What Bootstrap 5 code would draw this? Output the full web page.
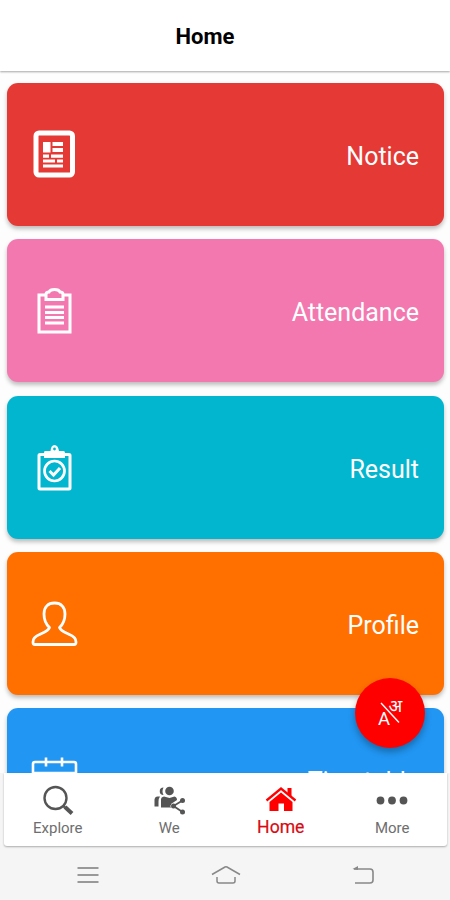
<!DOCTYPE html>
<html lang="en">
<head>
<meta charset="utf-8">
<meta name="viewport" content="width=device-width, initial-scale=1">
<title>Home</title>
<link href="https://cdn.jsdelivr.net/npm/bootstrap@5.3.0/dist/css/bootstrap.min.css" rel="stylesheet">
<style>
body{font-family:Roboto,"Liberation Sans",sans-serif;background:#f5f5f5}
.app-screen{height:900px}
.top-bar{height:71px;font-size:22px;line-height:74px;box-shadow:0 1px 2px rgba(0,0,0,.35);z-index:1;padding-right:40px}
.tile-list{height:702px;padding:12px 6px 0 7px;gap:13.3px;background:#fdfdfd}
.tile{height:143px;border-radius:11px;padding:0 25px 0 23px;font-size:25px;color:#fff;box-shadow:0 3px 4px rgba(0,0,0,.25)}
.tile svg{margin-bottom:1px}
.tile-notice{background:#e53935}
.tile-attendance{background:#f478b0}
.tile-result{background:#03b6cf}
.tile-profile{background:#ff7000}
.tile-timetable{background:#2196f3}
.tile-label{padding-top:5px;line-height:1.2}
.fab{right:25px;bottom:152px;width:70px;height:70px;background:#f00;box-shadow:0 4px 7px rgba(0,0,0,.3);z-index:2}
.tab-bar{height:73px;margin:0 3px 0 4px;box-shadow:0 1px 2px rgba(0,0,0,.3);border-radius:0 0 3px 3px;z-index:1}
.tab-row{margin:0 -1px 0 -2px}
.tab-item{font-size:15px;color:#6e6e6e;line-height:18px;padding-top:10px}
.tab-item svg{margin-bottom:2px}
.tab-current{color:#d80a12;font-size:17.6px;padding-top:9px;-webkit-text-stroke:.2px #d80a12}
.system-bar{height:54px;padding:3px 76px 0 77px}
</style>
<script src="https://cdn.jsdelivr.net/npm/bootstrap@5.3.0/dist/js/bootstrap.bundle.min.js"></script>
</head>
<body>
<div class="app-screen d-flex flex-column position-relative overflow-hidden">
  <header class="top-bar bg-white text-black text-center fw-bold flex-shrink-0 position-relative">Home</header>
  <main class="tile-list d-flex flex-column overflow-hidden flex-shrink-0">
    <a class="tile tile-notice d-flex align-items-center justify-content-between flex-shrink-0 text-decoration-none">
      <svg width="48" height="52" viewBox="0 0 48 52"><rect x="6" y="5" width="36.500" height="42" rx="3" fill="none" stroke="#fff" stroke-width="5"/><path d="M13 14h7.500v10.500H13zM22.500 14h10.500v4H22.500zM22.500 20h10.500v4H22.500zM13 26.500h6v3.200h-6zM21 26.500h12v3.200H21zM13 31.500h12v3H13zM27 31.500h6v3h-6zM13 36.500h20v3H13z" fill="#fff"/></svg>
      <span class="tile-label">Notice</span>
    </a>
    <a class="tile tile-attendance d-flex align-items-center justify-content-between flex-shrink-0 text-decoration-none">
      <svg width="48" height="52" viewBox="0 0 48 52" fill="none" stroke="#fff" stroke-width="3"><path d="M15 11H9v37h31V11h-6"/><path d="M16 15.500v-5q0-2.500 3-2.500 1-2.500 5.500-2.500t5.500 2.500q3 0 3 2.500v5z"/><path d="M15 23h19M15 28.500h19M15 33.500h19M15 39h19"/></svg>
      <span class="tile-label">Attendance</span>
    </a>
    <a class="tile tile-result d-flex align-items-center justify-content-between flex-shrink-0 text-decoration-none">
      <svg width="48" height="52" viewBox="0 0 48 52" fill="none" stroke="#fff" stroke-width="3"><rect x="9" y="13.500" width="31" height="34.500" rx="1"/><path d="M15 10h5.500Q21 4 24.500 4T29 10h4.500q1.500 0 1.500 2v5H14v-5q0-2 1-2z" fill="#fff" stroke="none"/><circle cx="24.500" cy="8" r="1.400" fill="#03b6cf" stroke="none"/><circle cx="24.500" cy="30" r="10" stroke-width="2.700"/><path d="M19.500 30l4 4 6.500-7" stroke-width="3"/></svg>
      <span class="tile-label">Result</span>
    </a>
    <a class="tile tile-profile d-flex align-items-center justify-content-between flex-shrink-0 text-decoration-none">
      <svg width="48" height="52" viewBox="0 0 48 52" fill="none" stroke="#fff" stroke-width="2.800" stroke-linejoin="round"><path d="M19.500 30.500C15.500 27 14 22 14 17c0-7 4-11 10.500-11S35 10 35 17c0 5-1.500 10-5.500 13.500 1.500 4 6 5 10 7 5 2 6.500 4.500 6.500 7.500 0 2-.5 2.500-2 2.500H5c-1.500 0-2-.5-2-2.500 0-3 1.500-5.500 6.500-7.500 4-2 8.500-3 10-7z"/></svg>
      <span class="tile-label">Profile</span>
    </a>
    <a class="tile tile-timetable d-flex align-items-center justify-content-between flex-shrink-0 text-decoration-none">
      <svg width="48" height="52" viewBox="0 0 48 52" fill="none" stroke="#fff" stroke-width="2.600"><rect x="3" y="9" width="43" height="38" rx="2"/><path d="M16 4.500v9M32 4.500v9M3 20h43"/></svg>
      <span class="tile-label">Timetable</span>
    </a>
  </main>
  <button class="fab btn rounded-circle border-0 p-0 position-absolute d-flex align-items-center justify-content-center" aria-label="Language">
    <svg width="34" height="34" viewBox="0 0 34 34" fill="#fff" font-family="Roboto,'Noto Sans Devanagari',sans-serif"><path d="M8 7l18 19.500" stroke="#fff" stroke-width="1.400"/><text x="5" y="29" font-size="18.500">A</text><text x="15.500" y="15.500" font-size="18">अ</text></svg>
  </button>
  <nav class="tab-bar bg-white flex-shrink-0 position-relative">
   <div class="tab-row d-flex">
    <div class="tab-item d-flex flex-column align-items-center w-25">
      <svg width="36" height="34" viewBox="0 0 36 34" fill="none" stroke="#555"><circle cx="15.500" cy="15" r="11" stroke-width="2.400"/><path d="M23 22.500l2 2" stroke-width="2.500"/><path d="M25 24l7 6.500" stroke-width="4"/></svg>Explore
    </div>
    <div class="tab-item d-flex flex-column align-items-center w-25">
      <svg width="36" height="34" viewBox="0 0 36 34" fill="#555"><path d="M12.500 4.500a3.700 3.700 0 1 0 0 7.500q-2-3.500 0-7.500z"/><circle cx="18.500" cy="8" r="4.300"/><path d="M3.500 16.500q.5-3 3-3H9q-1.500 2-1.500 5v5h-4zM10 24.500v-8q0-2.500 3-3l5.500 1.500 5-1.500q2.500 .5 2.500 3.500l-6 4v3.500z"/><path d="M31.500 17.500l-9 5.500 9 6" fill="none" stroke="#fff" stroke-width="4"/><path d="M31.500 17.500l-9 5.500 9 6" fill="none" stroke="#555" stroke-width="1.800"/><circle cx="31.500" cy="17.500" r="2.500"/><circle cx="22.500" cy="23" r="2.500"/><circle cx="31.500" cy="29" r="2.500"/></svg>We
    </div>
    <div class="tab-item tab-current d-flex flex-column align-items-center w-25">
      <svg width="36" height="34" viewBox="0 0 36 34" fill="#f00"><path d="M18 10.500L29.500 20v9H21v-7.500h-5.500V29h-9v-9z"/><path d="M3.500 18.500L18 6.500l14.500 12" fill="none" stroke="#f00" stroke-width="2.300"/><path d="M24.500 6h4v9l-4-3.500z"/></svg>Home
    </div>
    <div class="tab-item d-flex flex-column align-items-center w-25">
      <svg width="36" height="34" viewBox="0 0 36 34" fill="#555"><circle cx="6.500" cy="17.500" r="3.900"/><circle cx="18" cy="17.500" r="3.900"/><circle cx="29.500" cy="17.500" r="3.900"/></svg>More
    </div>
   </div>
  </nav>
  <footer class="system-bar d-flex align-items-center justify-content-between flex-shrink-0">
    <svg width="22" height="20" viewBox="0 0 22 20" stroke="#999" stroke-width="1.800"><path d="M.5 3h21M.5 10h21M.5 17h21"/></svg>
    <svg width="30" height="20" viewBox="0 0 30 20" fill="none" stroke="#888" stroke-width="1.500"><path d="M1 9.500L14 2q1-.5 2 0l13 7.500M6 12v4q0 2 2 2h14q2 0 2-2v-4"/></svg>
    <svg width="22" height="20" viewBox="0 0 22 20" fill="none" stroke="#888" stroke-width="1.600"><path d="M2 4h16q3 0 3 3v8q0 3-3 3H3"/><path d="M6 1v4L.5 4z" fill="#888" stroke="none"/></svg>
  </footer>
</div>
</body>
</html>
